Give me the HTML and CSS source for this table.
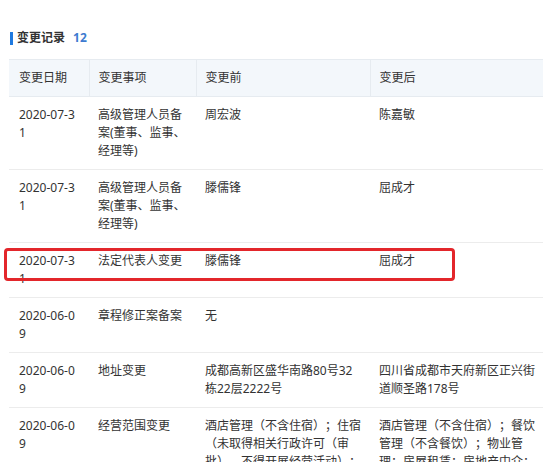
FILE: index.html
```html
<!DOCTYPE html>
<html lang="zh-CN">
<head>
  <meta charset="UTF-8">
  <title>变更记录</title>
  <link rel="stylesheet" href="styles.css">
</head>
<body>
  <div class="panel">
    <h3 class="title">变更记录 <span class="count">12</span></h3>
    <table class="records">
      <colgroup>
        <col class="c-date">
        <col class="c-item">
        <col class="c-before">
        <col class="c-after">
      </colgroup>
      <thead>
        <tr>
          <th>变更日期</th>
          <th>变更事项</th>
          <th>变更前</th>
          <th>变更后</th>
        </tr>
      </thead>
      <tbody>
        <tr>
          <td class="date">2020-07-31</td>
          <td>高级管理人员备案(董事、监事、经理等)</td>
          <td>周宏波</td>
          <td>陈嘉敏</td>
        </tr>
        <tr>
          <td class="date">2020-07-31</td>
          <td>高级管理人员备案(董事、监事、经理等)</td>
          <td>滕儒锋</td>
          <td>屈成才</td>
        </tr>
        <tr>
          <td class="date">2020-07-31</td>
          <td>法定代表人变更</td>
          <td>滕儒锋</td>
          <td>屈成才</td>
        </tr>
        <tr>
          <td class="date">2020-06-09</td>
          <td>章程修正案备案</td>
          <td>无</td>
          <td></td>
        </tr>
        <tr>
          <td class="date">2020-06-09</td>
          <td>地址变更</td>
          <td>成都高新区盛华南路80号32栋22层2222号</td>
          <td>四川省成都市天府新区正兴街道顺圣路178号</td>
        </tr>
        <tr>
          <td class="date">2020-06-09</td>
          <td>经营范围变更</td>
          <td>酒店管理（不含住宿）；住宿（未取得相关行政许可（审批），不得开展经营活动）；餐饮管理（不含餐饮）；物业管理。</td>
          <td>酒店管理（不含住宿）；餐饮管理（不含餐饮）；物业管理；房屋租赁；房地产中介；会议及展览服务。</td>
        </tr>
      </tbody>
    </table>
  </div>

  <!-- 标注框 -->
  <div class="mark"></div>
</body>
</html>
```

FILE: styles.css
```css
* { box-sizing: border-box; margin: 0; padding: 0; }
body {
  font-family: "Noto Sans", "Noto Sans CJK SC", sans-serif;
  font-size: 12px;
  line-height: 18px;
  color: #333;
  background: #fff;
  position: relative;
  text-spacing-trim: space-all;
}

.panel { padding: 29px 4px 0 9px; }

/* 标题 */
.title {
  font-size: 12px;
  line-height: 18px;
  font-weight: 700;
  color: #333;
  padding-left: 1px;
  display: flex;
  align-items: center;
}
.title::before {
  content: "";
  width: 3px;
  height: 13px;
  background: #1f7ae0;
  margin-right: 4px;
}
.title .count {
  color: #3d7bd0;
  margin-left: 8px;
}

/* 表格 */
.records {
  margin-top: 12px;
  width: 534px;
  border-collapse: collapse;
  table-layout: fixed;
}
.c-date { width: 80px; }
.c-item { width: 107px; }
.c-before { width: 174px; }
.c-after { width: 173px; }

.records th {
  background: #f3f7fb;
  font-weight: 400;
  text-align: left;
  padding: 9px 8px 9px 9px;
  border-top: 1px solid #e6ebf0;
  border-bottom: 1px solid #e6ebf0;
}
.records th + th { border-left: 1px solid #e6ebf0; }
.records th:first-child { padding-left: 10px; }

.records td {
  vertical-align: top;
  padding: 9px 8px 9px 9px;
  border-bottom: 1px solid #ececec;
}
.records td.date {
  padding-left: 10px;
  padding-right: 12px;
  word-break: break-all;
}

/* 红色标注 */
.mark {
  position: absolute;
  left: 4px;
  top: 248px;
  width: 451px;
  height: 33px;
  border: 3px solid #e3262b;
  border-radius: 4px;
}
```
